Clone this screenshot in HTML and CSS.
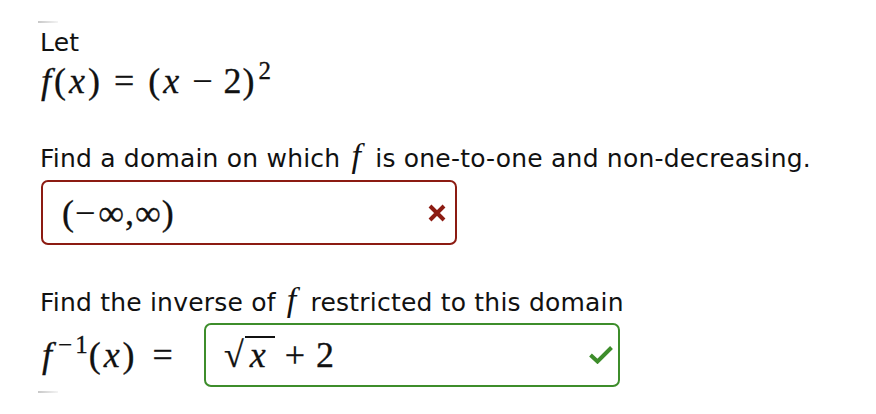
FILE: index.html
```html
<!DOCTYPE html>
<html lang="en">
<head>
    <meta charset="UTF-8">
    <meta name="viewport" content="width=device-width, initial-scale=1.0">
    <title>Inverse Functions</title>
    <link rel="stylesheet" href="styles.css">
</head>
<body>
    <div class="question">
        <div class="rule"></div>
        <p class="text let">Let</p>
        <div class="math given"><i>f</i>(<i>x</i>)<span class="rel">=</span>(<i>x</i><span class="bin">−</span>2)<sup>2</sup></div>
        <p class="text part1">Find a domain on which <i class="mi">f</i> is one-to-one and non-decreasing.</p>
        <div class="answer wrong">
            <span class="math">(<span class="neg">−</span>∞,∞)</span>
            <svg class="mark" width="18" height="18" viewBox="0 0 18 18">
                <path d="M2 2 L16 16 M16 2 L2 16" stroke="#8c1b12" stroke-width="4" fill="none"/>
            </svg>
        </div>
        <p class="text part2">Find the inverse of <i class="mi">f</i> restricted to this domain</p>
        <div class="inverse-row">
            <span class="math"><i>f</i><sup><span class="neg">−</span>1</sup>(<i>x</i>)<span class="rel">=</span></span>
            <div class="answer right">
                <span class="math"><span class="surd">√</span><span class="radicand"><i>x</i></span><span class="bin">+</span>2</span>
                <svg class="mark" width="24" height="18" viewBox="0 0 24 18">
                    <path d="M1.5 9 L8.5 15.5 L22.5 1.5" stroke="#3d8d2b" stroke-width="4" fill="none"/>
                </svg>
            </div>
        </div>
        <div class="rule"></div>
    </div>
</body>
</html>
```

FILE: styles.css
```css
body {
    margin: 0;
    padding: 0;
    background: #fff;
    color: #111;
}
.question {
    padding: 21px 0 0 38px;
}
.rule {
    width: 20px;
    height: 2px;
    background: linear-gradient(to right, #c8c8c8, #f4f4f4);
}
.text {
    font-family: "DejaVu Sans", Verdana, sans-serif;
    font-size: 25px;
    letter-spacing: 0.2px;
    margin: 0 0 0 2px;
    line-height: 28px;
}
.let {
    margin-top: 6px;
}
.math {
    font-family: "Liberation Serif", "Times New Roman", serif;
    font-size: 36px;
    letter-spacing: 1px;
    white-space: nowrap;
    -webkit-text-stroke: 0.3px #111;
}
.math i {
    font-style: italic;
    padding: 0 2px;
}
.math sup {
    font-size: 25px;
    vertical-align: 14px;
    line-height: 0;
    margin-left: 3px;
}
.given {
    margin: 4px 0 0 1px;
    line-height: 40px;
}
.rel {
    margin: 0 13px;
}
.bin {
    margin: 0 10px;
}
.neg {
    margin-right: 2px;
}
.mi {
    font-family: "Liberation Serif", serif;
    font-size: 34px;
    line-height: 0;
    margin: 0 6px 0 3px;
}
.part1 {
    margin-top: 44px;
}
.answer {
    display: flex;
    align-items: center;
    justify-content: space-between;
    box-sizing: border-box;
    width: 416px;
    border: 2px solid;
    border-radius: 7px;
    background: #fff;
}
.wrong {
    height: 65px;
    margin: 7px 0 0 3px;
    padding: 0 9px 0 19px;
    border-color: #8c1b12;
}
.right {
    height: 64px;
    padding: 0 5px 0 18px;
    border-color: #3d8d2b;
}
.mark {
    display: block;
}
.part2 {
    margin-top: 44px;
}
.inverse-row {
    display: flex;
    align-items: center;
    margin: 6px 0 4px 2px;
}
.inverse-row > .math {
    width: 164px;
}
.inverse-row .rel {
    margin: 0 0 0 17px;
}
.surd {
    display: inline-block;
}
.radicand {
    display: inline-block;
    border-top: 2px solid #111;
    padding: 0 6px 0 3px;
    line-height: 34px;
}
```
